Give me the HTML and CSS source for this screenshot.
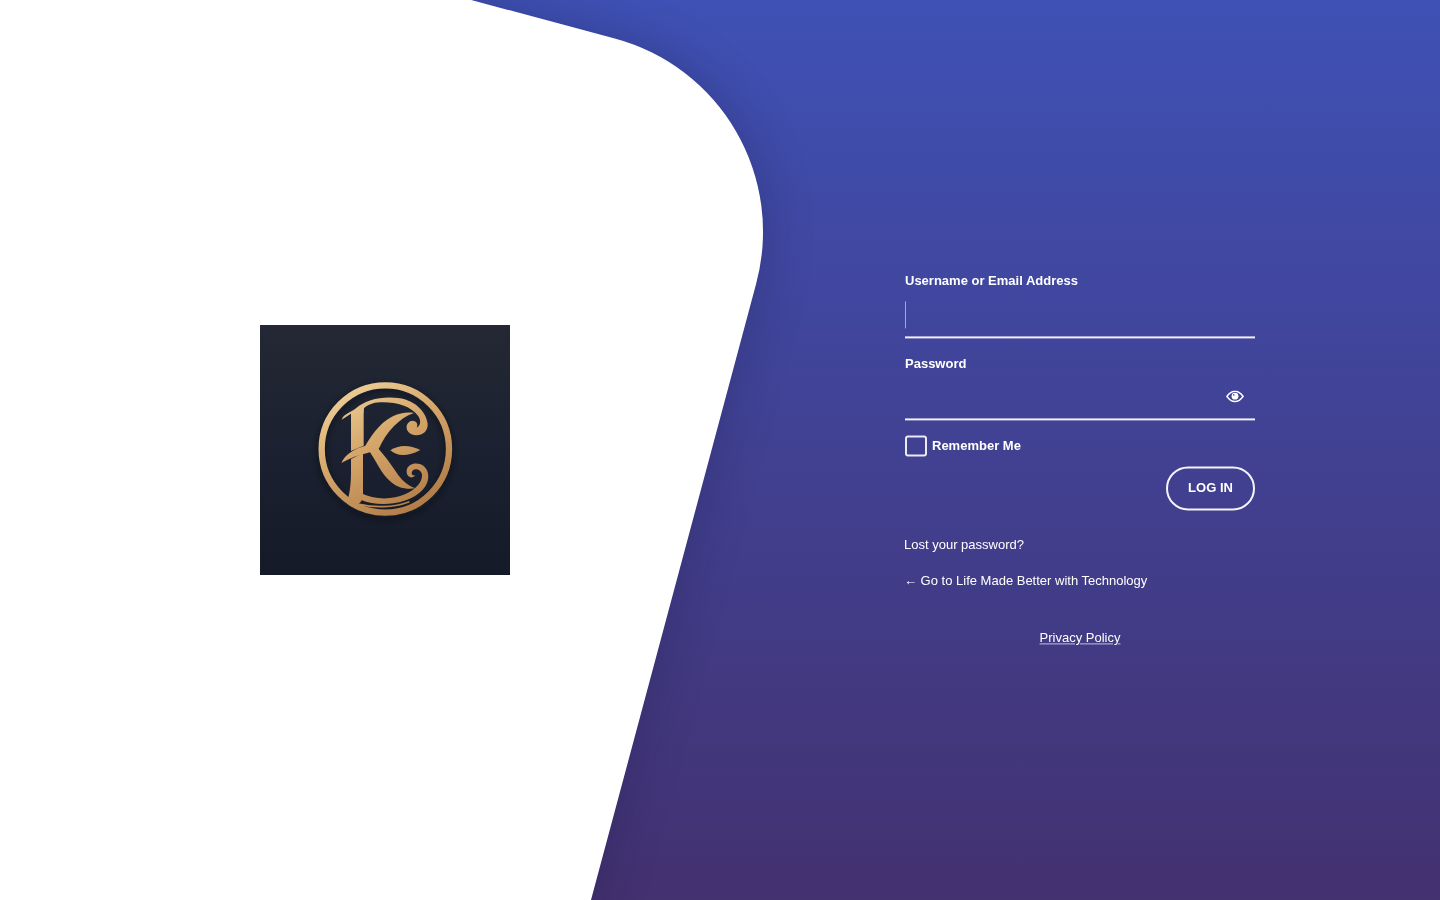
FILE: index.html
```html
<!DOCTYPE html>
<html lang="en">
<head>
<meta charset="utf-8">
<title>Log In</title>
<link rel="stylesheet" href="styles.css">
</head>
<body>
<div class="backdrop"><div class="sheet"></div></div>
<main class="page">
  <section class="brand">
    <svg class="logo" viewBox="0 0 750 750" role="img" aria-label="KC logo">
      <defs>
        <linearGradient id="tile" x1="0" y1="0" x2="0" y2="1">
          <stop offset="0" stop-color="#242834"/>
          <stop offset="0.5" stop-color="#1b2130"/>
          <stop offset="1" stop-color="#141a27"/>
        </linearGradient>
        <linearGradient id="goldU" gradientUnits="userSpaceOnUse" x1="230" y1="170" x2="470" y2="570">
          <stop offset="0" stop-color="#f1d59e"/>
          <stop offset="0.45" stop-color="#d6a76b"/>
          <stop offset="1" stop-color="#af7945"/>
        </linearGradient>
        <filter id="soft" x="-20%" y="-20%" width="140%" height="140%">
          <feGaussianBlur stdDeviation="1.4"/>
        </filter>
        <filter id="drop" x="-20%" y="-20%" width="140%" height="140%">
          <feGaussianBlur stdDeviation="12"/>
        </filter>
      </defs>
      <rect width="750" height="750" fill="url(#tile)"/>
      <circle cx="376" cy="380" r="192" fill="none" stroke="#0b0f18" stroke-opacity=".5" stroke-width="20" filter="url(#drop)"/>
      <g filter="url(#soft)">
        <circle cx="376" cy="372" r="191" fill="none" stroke="url(#goldU)" stroke-width="19"/>
        <path fill="url(#goldU)" d="M245 284C250 268 272 262 288 250C318 222 372 212 420 220C464 228 498 258 503 296C505 320 484 334 462 330C440 326 432 302 448 290C462 282 478 294 470 308C482 302 484 286 474 272C452 242 405 230 360 232C338 233 322 240 312 250L311 264H277C267 270 256 278 245 284Z"/>
        <path fill="url(#goldU)" d="M273 262H311V362L273 378ZM273 402L309 384V510C310 520 304 532 292 540L265 517C270 500 273 470 273 440Z"/>
        <path fill="url(#goldU)" d="M302 504C340 524 395 526 435 508C470 492 488 470 486 448C482 432 462 428 456 440C453 447 458 453 466 451C456 464 438 456 440 436C443 418 464 412 482 418C502 426 510 450 502 472C490 505 450 528 400 535C365 539 330 536 302 524Z"/>
        <path fill="none" stroke="url(#goldU)" stroke-width="5" d="M298 538C340 548 400 549 448 530"/>
        <path fill="url(#goldU)" d="M462 264C424 258 388 274 360 302C342 320 326 344 316 362C286 370 256 386 244 414C268 400 296 390 330 382C350 410 364 448 394 472C414 490 442 494 466 490C440 480 424 464 408 440C390 414 374 392 356 372C368 346 382 324 402 303C420 286 438 272 462 264Z"/>
        <path fill="url(#goldU)" d="M391 376C412 362 444 356 481 375C446 394 412 396 391 376Z"/>
      </g>
    </svg>
  </section>
  <section class="panel">
    <form class="login">
      <label class="field-label" for="user">Username or Email Address</label>
      <div class="field field-user">
        <input class="text-input" id="user" type="text">
        <span class="caret"></span>
      </div>
      <label class="field-label" for="pass">Password</label>
      <div class="field field-pass">
        <input class="text-input" id="pass" type="password">
        <svg class="eye" viewBox="0 0 18 12" aria-hidden="true">
          <path class="eye-lid" d="M.9 6C3.8 1.900 6.400.8 9 .8s5.200 1.100 8.100 5.200c-2.900 4.100-5.500 5.200-8.100 5.200S3.800 10.100.9 6Z"/>
          <circle class="eye-pupil" cx="9" cy="5.800" r="3.400"/>
          <circle class="eye-glint" cx="7.800" cy="4.500" r=".8"/>
        </svg>
      </div>
      <div class="remember">
        <span class="check"></span>
        <span class="remember-text">Remember Me</span>
      </div>
      <div class="actions"><button class="submit" type="button">LOG IN</button></div>
      <p class="nav-link lost"><a href="#">Lost your password?</a></p>
      <p class="nav-link back"><a href="#">← Go to Life Made Better with Technology</a></p>
      <p class="privacy"><a href="#">Privacy Policy</a></p>
    </form>
  </section>
</main>
</body>
</html>
```

FILE: styles.css
```css
* { box-sizing: border-box; }
html, body { height: 100%; margin: 0; overflow: hidden; }
body {
  position: relative;
  font-family: "Liberation Sans", Arial, sans-serif;
  font-size: 13px;
  color: #fff;
  background: linear-gradient(180deg, #3f51b5 0%, #433170 100%);
}
.backdrop {
  position: absolute;
  inset: 0;
  overflow: hidden;
}
.sheet {
  position: absolute;
  left: -826.7px;
  top: -125.5px;
  width: 1400px;
  height: 2000px;
  background: #fff;
  border-radius: 200px;
  transform: rotate(15deg);
  box-shadow: 0 0 50px rgba(20, 20, 60, 0.28);
}
.page {
  position: relative;
  display: flex;
  height: 100%;
}
.brand {
  width: 770px;
  display: flex;
  align-items: center;
  justify-content: center;
}
.logo { display: block; width: 250px; height: 250px; }
.panel {
  flex: 1;
  padding: 273px 0 0 135px;
}
.login {
  width: 350px;
  display: flex;
  flex-direction: column;
  transform: translateY(0.4px);
  will-change: transform;
}
.field-label {
  display: block;
  font-weight: 700;
  line-height: 15px;
}
.field { position: relative; }
.field-user { height: 50px; margin-bottom: 18px; }
.field-pass { height: 49px; }
.text-input {
  display: block;
  width: 100%;
  height: 100%;
  padding: 0 40px 0 0;
  background: transparent;
  border: 0;
  border-bottom: 2px solid #f1f0f8;
  outline: none;
  color: #fff;
  font: inherit;
}
.caret {
  position: absolute;
  left: 0;
  top: 13px;
  width: 1px;
  height: 27px;
  background: #e8a33c;
}
.eye {
  position: absolute;
  right: 11px;
  top: 19px;
  width: 18px;
  height: 12px;
}
.eye-lid { fill: none; stroke: #fff; stroke-width: 1.6; }
.eye-pupil { fill: #fff; }
.eye-glint { fill: #4146a0; }
.remember {
  display: flex;
  align-items: center;
  gap: 5px;
  margin-top: 15px;
  height: 21px;
}
.check {
  width: 22px;
  height: 21px;
  border: 2px solid #eceaf6;
  border-radius: 3px;
}
.remember-text { font-weight: 700; line-height: 15px; }
.actions { display: flex; justify-content: flex-end; margin-top: 10px; }
.submit {
  width: 89px;
  height: 44px;
  padding: 0 0 2px;
  background: transparent;
  border: 2px solid #f4f3fa;
  border-radius: 22px;
  color: #fff;
  font: 700 13px "Liberation Sans", Arial, sans-serif;
}
.nav-link { margin: 0; line-height: 15px; margin-left: -1px; }
.nav-link a { color: #fff; text-decoration: none; }
.lost { margin-top: 27px; }
.back { margin-top: 21px; }
.privacy { margin: 42px 0 0; text-align: center; line-height: 15px; }
.privacy a {
  color: #fff;
  text-decoration: underline;
  text-decoration-color: #c4c0e0;
}
```
